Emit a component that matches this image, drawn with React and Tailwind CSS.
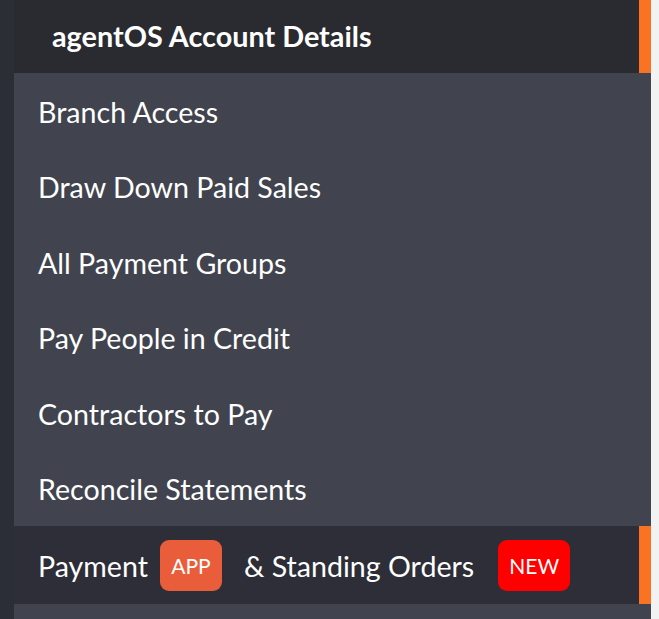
import React from 'react';

const items = [
  'Branch Access',
  'Draw Down Paid Sales',
  'All Payment Groups',
  'Pay People in Credit',
  'Contractors to Pay',
  'Reconcile Statements',
];

export default function App() {
  return (
    <div
      className="flex w-[659px] h-[619px] bg-[#f2f2f2] overflow-hidden"
      style={{ fontFamily: 'Lato, "Open Sans", sans-serif' }}
    >
      {/* left strip */}
      <div className="w-[14px] bg-[#2c2e35] shrink-0" />

      <div className="flex flex-col w-[637px] shrink-0">
        {/* header */}
        <div className="flex h-[73px] shrink-0">
          <div className="flex-1 bg-[#2a2b31] flex items-center pl-[38px] text-white text-[28.8px] font-bold">
            agentOS Account Details
          </div>
          <div className="w-[12px] bg-[#f97322]" />
        </div>

        {/* submenu */}
        <div className="bg-[#41444e] flex flex-col">
          {items.map((item) => (
            <div key={item} className="h-[75.5px] flex items-center pl-[24px] pt-[3px] text-white text-[28.6px]">
              {item}
            </div>
          ))}
        </div>

        {/* payment row */}
        <div className="flex h-[78px] shrink-0">
          <div className="flex-1 bg-[#2d2e37] flex items-center pl-[24px] pt-[3px] text-white text-[28.6px]">
            <span>Payment</span>
            <span className="ml-[12px] -mt-[2px] w-[62px] h-[51px] rounded-[9px] bg-[#e95d3a] flex items-center justify-center text-[21px]">
              APP
            </span>
            <span className="ml-[22px]">&amp; Standing Orders</span>
            <span className="ml-[24px] -mt-[2px] w-[72px] h-[51px] rounded-[9px] bg-[#ff0000] flex items-center justify-center text-[21px]">
              NEW
            </span>
          </div>
          <div className="w-[12px] bg-[#f97322]" />
        </div>

        <div className="flex-1 bg-[#41444e]" />
      </div>
    </div>
  );
}
